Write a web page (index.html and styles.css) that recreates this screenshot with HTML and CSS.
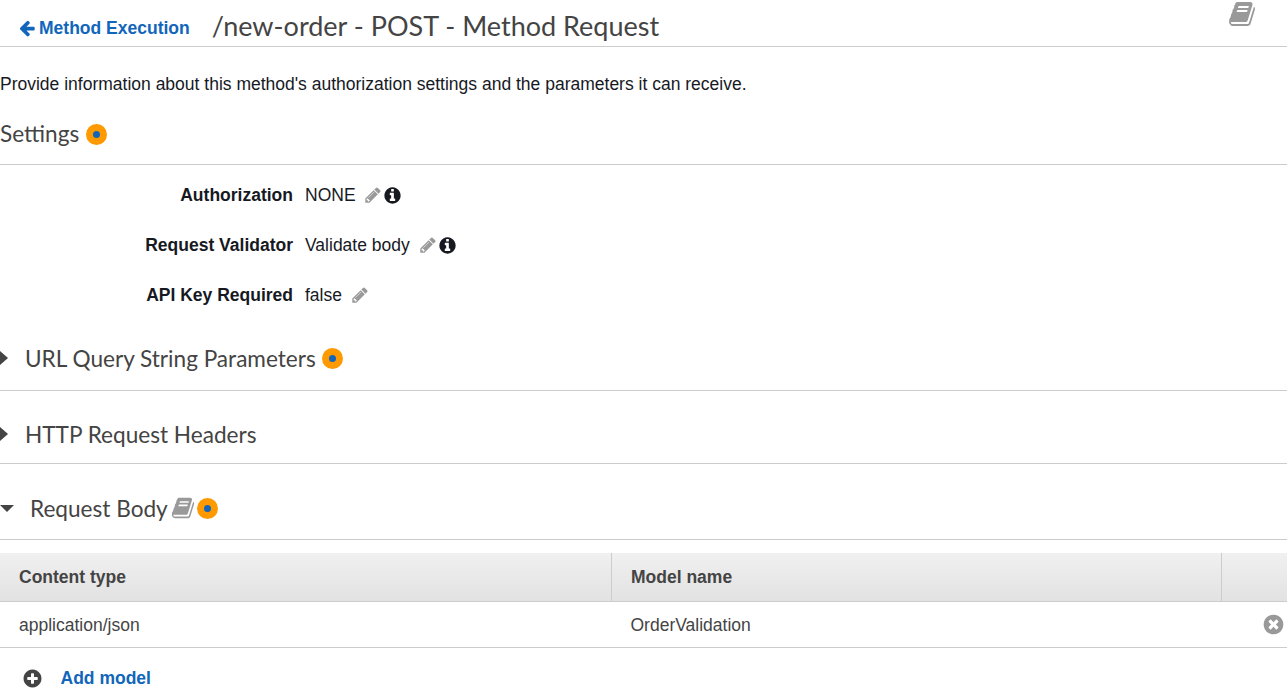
FILE: index.html
```html
<!DOCTYPE html>
<html lang="en">
<head>
    <meta charset="UTF-8">
    <title>/new-order - POST - Method Request</title>
    <link rel="stylesheet" href="styles.css">
</head>
<body>

<svg class="defs" width="0" height="0">
    <symbol id="i-arrow" viewBox="0 0 1792 1792"><path d="M1664 896v128q0 53-32.5 90.5t-84.5 37.5h-704l293 294q38 36 38 90t-38 90l-75 76q-37 37-90 37-52 0-91-37l-651-652q-37-37-37-90 0-52 37-91l651-650q38-38 91-38 52 0 90 38l75 74q38 38 38 91t-38 91l-293 293h704q52 0 84.5 37.5t32.5 90.5z"/></symbol>
    <symbol id="i-book" viewBox="0 0 1792 1792"><path d="M1703 478q40 57 18 129l-275 906q-19 64-76.5 107.5t-122.5 43.5h-923q-77 0-148.5-53.5t-99.5-131.5q-24-67-2-127 0-4 3-27t4-37q1-8-3-21.5t-3-19.5q2-11 8-21t16.5-23.5 16.5-23.5q23-38 45-91.5t30-91.5q3-10 .5-30t-.5-28q3-11 17-28t17-23q21-36 42-92t25-90q1-9-2.5-32t.5-28q4-13 22-30.5t22-22.5q19-26 42.5-84.5t27.5-96.5q1-8-3-25.5t-2-26.5q2-8 9-18t18-23 17-21q8-12 16.5-30.5t15-35 16-36 19.5-32 26.5-23.5 36-11.5 47.5 5.5l-1 3q38-9 51-9h761q74 0 114 56t18 130l-274 906q-36 119-71.5 153.5t-128.5 34.5h-869q-27 0-38 15-11 16-1 43 24 70 144 70h923q29 0 56-15.5t35-41.5l300-987q7-22 5-57 38 15 59 43zm-1064 2q-4 13 2 22.5t20 9.5h608q13 0 25.5-9.5t16.5-22.5l21-64q4-13-2-22.5t-20-9.5h-608q-13 0-25.5 9.5t-16.5 22.5zm-83 256q-4 13 2 22.5t20 9.5h608q13 0 25.5-9.5t16.5-22.5l21-64q4-13-2-22.5t-20-9.5h-608q-13 0-25.5 9.5t-16.5 22.5z"/></symbol>
    <symbol id="i-pencil" viewBox="0 0 1792 1792"><path d="M491 1536l91-91-235-235-91 91v107h128v128h107zm523-928q0-22-22-22-10 0-17 7l-542 542q-7 7-7 17 0 22 22 22 10 0 17-7l542-542q7-7 7-17zm-54-192l416 416-832 832h-416v-416zm683 96q0 53-37 90l-166 166-416-416 166-165q36-38 90-38 53 0 91 38l235 234q37 39 37 91z"/></symbol>
    <symbol id="i-info" viewBox="0 0 1792 1792"><path d="M1152 1376v-160q0-14-9-23t-23-9h-96v-512q0-14-9-23t-23-9h-320q-14 0-23 9t-9 23v160q0 14 9 23t23 9h96v320h-96q-14 0-23 9t-9 23v160q0 14 9 23t23 9h448q14 0 23-9t9-23zm-128-896v-160q0-14-9-23t-23-9h-192q-14 0-23 9t-9 23v160q0 14 9 23t23 9h192q14 0 23-9t9-23zm640 416q0 209-103 385.5t-279.5 279.5-385.5 103-385.5-103-279.5-279.5-103-385.5 103-385.5 279.5-279.5 385.5-103 385.5 103 279.5 279.5 103 385.5z"/></symbol>
    <symbol id="i-plus" viewBox="0 0 1792 1792"><path d="M1344 960v-128q0-26-19-45t-45-19h-256v-256q0-26-19-45t-45-19h-128q-26 0-45 19t-19 45v256h-256q-26 0-45 19t-19 45v128q0 26 19 45t45 19h256v256q0 26 19 45t45 19h128q26 0 45-19t19-45v-256h256q26 0 45-19t19-45zm320-64q0 209-103 385.5t-279.5 279.5-385.5 103-385.5-103-279.5-279.5-103-385.5 103-385.5 279.5-279.5 385.5-103 385.5 103 279.5 279.5 103 385.5z"/></symbol>
    <symbol id="i-times" viewBox="0 0 1792 1792"><path d="M1277 1122q0-26-19-45l-181-181 181-181q19-19 19-45 0-27-19-46l-90-90q-19-19-46-19-26 0-45 19l-181 181-181-181q-19-19-45-19-27 0-46 19l-90 90q-19 19-19 46 0 26 19 45l181 181-181 181q-19 19-19 45 0 27 19 46l90 90q19 19 46 19 26 0 45-19l181-181 181 181q19 19 45 19 27 0 46-19l90-90q19-19 19-46zm387-226q0 209-103 385.5t-279.5 279.5-385.5 103-385.5-103-279.5-279.5-103-385.5 103-385.5 279.5-279.5 385.5-103 385.5 103 279.5 279.5 103 385.5z"/></symbol>
</svg>

<header class="page-header">
    <a class="back-link" href="#">
        <svg class="icon icon-back"><use href="#i-arrow"/></svg>Method Execution
    </a>
    <h1 class="page-title">/new-order - POST - Method Request</h1>
    <svg class="icon icon-docs"><use href="#i-book"/></svg>
</header>

<p class="intro">Provide information about this method's authorization settings and the parameters it can receive.</p>

<section class="section section-settings">
    <h2 class="section-title">Settings <span class="hint"></span></h2>
</section>

<dl class="settings">
    <div class="setting">
        <dt>Authorization</dt>
        <dd>NONE <svg class="icon icon-edit"><use href="#i-pencil"/></svg><svg class="icon icon-info"><use href="#i-info"/></svg></dd>
    </div>
    <div class="setting">
        <dt>Request Validator</dt>
        <dd>Validate body <svg class="icon icon-edit"><use href="#i-pencil"/></svg><svg class="icon icon-info"><use href="#i-info"/></svg></dd>
    </div>
    <div class="setting">
        <dt>API Key Required</dt>
        <dd>false <svg class="icon icon-edit"><use href="#i-pencil"/></svg></dd>
    </div>
</dl>

<section class="section section-query">
    <span class="caret caret-right"></span>
    <h2 class="section-title">URL Query String Parameters <span class="hint"></span></h2>
</section>

<section class="section section-headers">
    <span class="caret caret-right"></span>
    <h2 class="section-title">HTTP Request Headers</h2>
</section>

<section class="section section-body">
    <span class="caret caret-down"></span>
    <h2 class="section-title">Request Body <svg class="icon icon-book-small"><use href="#i-book"/></svg><span class="hint"></span></h2>
</section>

<table class="models">
    <thead>
    <tr>
        <th>Content type</th>
        <th>Model name</th>
        <th></th>
    </tr>
    </thead>
    <tbody>
    <tr>
        <td>application/json</td>
        <td>OrderValidation</td>
        <td class="cell-remove"><svg class="icon icon-remove"><use href="#i-times"/></svg></td>
    </tr>
    </tbody>
</table>

<div class="add-model">
    <svg class="icon icon-add"><use href="#i-plus"/></svg>
    <a href="#">Add model</a>
</div>

</body>
</html>
```

FILE: styles.css
```css
html
{
    font-family: "Liberation Sans", Arial, sans-serif;
    font-size: 17.5px;
    color: #16191f;
}

body
{
    margin: 0;
    background: #fff;
    overflow: hidden;
}

a
{
    color: #1166bb;
    font-weight: bold;
    text-decoration: none;
}

.defs
{
    display: block;
}

.icon
{
    fill: currentColor;
    flex: none;
}

.page-header
{
    display: flex;
    align-items: center;
    height: 46px;
    padding-right: 31px;
    border-bottom: 1px solid #ccc;
}

.back-link
{
    display: flex;
    align-items: center;
    margin-left: 18px;
    position: relative;
    top: 5px;
}

.icon-back
{
    width: 18px;
    height: 18px;
    margin-right: 3px;
}

.page-title
{
    margin: 0 0 0 22px;
    font: normal 27px Lato, sans-serif;
    color: #444;
    position: relative;
    top: 2px;
}

.icon-docs
{
    width: 28px;
    height: 28px;
    margin-left: auto;
    margin-top: -18px;
    color: #999;
}

.intro
{
    margin: 0;
    height: 30px;
    padding-top: 27px;
    line-height: 20px;
}

.section
{
    display: flex;
    align-items: center;
    border-bottom: 1px solid #ccc;
}

.section-settings
{
    height: 58px;
    padding-bottom: 2px;
}

.section-settings .hint
{
    margin: 2px 0 0 1px;
}

.section-query
{
    height: 64px;
}

.section-headers
{
    height: 58px;
    padding-top: 14px;
}

.section-body
{
    height: 62px;
    padding-top: 13px;
}

.section-title
{
    display: flex;
    align-items: center;
    gap: 6px;
    margin: 0;
    font: normal 22.6px Lato, sans-serif;
    color: #444;
}

.hint
{
    display: inline-block;
    box-sizing: border-box;
    width: 21px;
    height: 21px;
    border: 7px solid #ff9900;
    border-radius: 50%;
    background: #1166bb;
}

.caret
{
    width: 0;
    height: 0;
    flex: none;
}

.caret-right
{
    margin-right: 17px;
    border-top: 7px solid transparent;
    border-bottom: 7px solid transparent;
    border-left: 8px solid #444;
}

.caret-down
{
    margin-right: 16px;
    border-left: 7px solid transparent;
    border-right: 7px solid transparent;
    border-top: 7px solid #444;
}

.settings
{
    margin: 0;
    padding: 5px 0 6px;
}

.setting
{
    display: flex;
    align-items: center;
    height: 50px;
}

.setting dt
{
    width: 293px;
    font-weight: bold;
    text-align: right;
}

.setting dd
{
    display: flex;
    align-items: center;
    margin: 0 0 0 12px;
    white-space: pre;
}

.icon-edit
{
    width: 18px;
    height: 18px;
    margin-left: 4px;
    color: #999;
}

.icon-info
{
    width: 19px;
    height: 19px;
    margin-left: 1px;
}

.icon-book-small
{
    width: 24px;
    height: 24px;
    color: #999;
    margin: 0 -4px 0 -3px;
}

.models
{
    width: 100%;
    margin-top: 13px;
    border-collapse: collapse;
    table-layout: fixed;
}

.models th,
.models td
{
    padding: 0 0 0 19px;
    text-align: left;
}

.models th
{
    height: 48px;
    background: linear-gradient(#f0f0f0, #e2e2e2);
    border-bottom: 1px solid #ccc;
    border-right: 1px solid #ccc;
    color: #444;
}

.models th:last-child
{
    border-right: none;
}

.models th:nth-child(1)
{
    width: 592px;
}

.models th:nth-child(2)
{
    width: 590px;
}

.models td
{
    height: 43px;
    padding-top: 2px;
    border-bottom: 1px solid #ccc;
    color: #444;
}

.models td.cell-remove
{
    padding: 0;
    text-align: right;
}

.icon-remove
{
    width: 23px;
    height: 23px;
    margin-right: 2px;
    color: #999;
    vertical-align: middle;
}

.add-model
{
    display: flex;
    align-items: center;
    height: 60px;
    padding-left: 22px;
}

.icon-add
{
    width: 21px;
    height: 21px;
    margin-right: 17.5px;
    color: #444;
}
```
